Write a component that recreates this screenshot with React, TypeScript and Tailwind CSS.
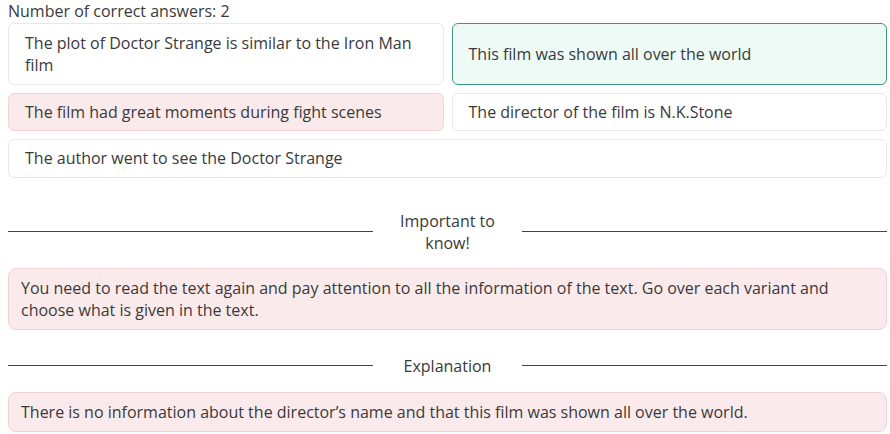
import React from 'react';

type Variant = 'plain' | 'correct' | 'wrong';

interface Answer {
  text: string;
  variant: Variant;
  pad: string;
  wide?: boolean;
}

const answers: Answer[] = [
  { text: 'The plot of Doctor Strange is similar to the Iron Man film', variant: 'plain', pad: 'py-2' },
  { text: 'This film was shown all over the world', variant: 'correct', pad: 'py-2' },
  { text: 'The film had great moments during fight scenes', variant: 'wrong', pad: 'py-[7px]' },
  { text: 'The director of the film is N.K.Stone', variant: 'plain', pad: 'py-[7px]' },
  { text: 'The author went to see the Doctor Strange', variant: 'plain', pad: 'pt-[7px] pb-2', wide: true },
];

const variantClass: Record<Variant, string> = {
  plain: 'bg-white border-[#e6e8ea]',
  correct: 'bg-[#eefaf5] border-[#3f9686]',
  wrong: 'bg-[#fbeaeb] border-[#f1d3d5]',
};

function Divider({ title, className }: { title: string; className?: string }) {
  return (
    <div className={`flex items-center ${className ?? ''}`}>
      <div className="h-px flex-1 bg-[#444] -translate-y-[1px]" />
      <div className="w-[149px] px-[14px] text-center leading-[22px]">{title}</div>
      <div className="h-px flex-1 bg-[#444] -translate-y-[1px]" />
    </div>
  );
}

export default function App() {
  return (
    <div
      className="bg-white text-[16px] text-[#3a3a3a] pl-2 w-[887px] pb-[2px]"
      style={{ fontFamily: '"Open Sans", "Noto Sans", sans-serif' }}
    >
      <p className="leading-[22px] mb-[1px]">Number of correct answers: 2</p>

      {/* Answer variants */}
      <div className="grid grid-cols-2 gap-2">
        {answers.map((a) => (
          <div
            key={a.text}
            className={`flex items-center rounded-md border px-4 leading-[22px] ${a.pad} ${variantClass[a.variant]} ${
              a.wide ? 'col-span-2' : ''
            }`}
          >
            {a.text}
          </div>
        ))}
      </div>

      <Divider title="Important to know!" className="mt-8 mb-[14px]" />
      <div className="rounded-lg border border-[#f1d3d5] bg-[#fbeaeb] px-3 py-2 leading-[22px]">
        You need to read the text again and pay attention to all the information of the text. Go over each
        variant and choose what is given in the text.
      </div>

      <Divider title="Explanation" className="mt-[25px] mb-[15px]" />
      <div className="rounded-lg border border-[#f1d3d5] bg-[#fbeaeb] px-3 py-2 leading-[22px]">
        There is no information about the director’s name and that this film was shown all over the world.
      </div>
    </div>
  );
}
